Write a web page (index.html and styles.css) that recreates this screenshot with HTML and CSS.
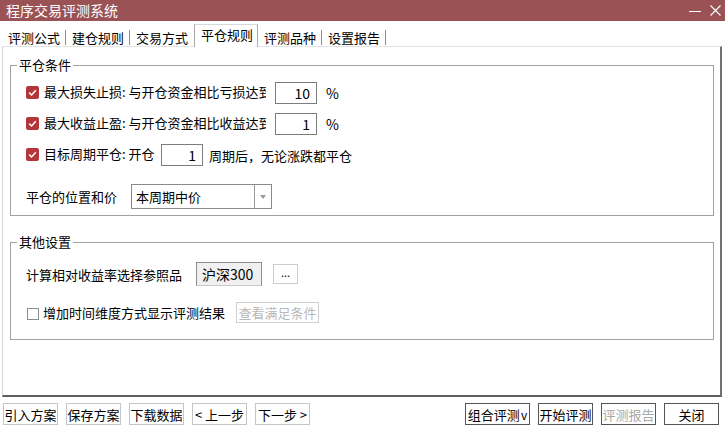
FILE: index.html
```html
<!DOCTYPE html>
<html>
<head>
<meta charset="utf-8">
<link rel="stylesheet" href="styles.css">
</head>
<body>
<div class="window">
  <div class="titlebar">
    <span class="title">程序交易评测系统</span>
    <div class="controls">
      <span class="min"></span>
      <svg class="close" width="11" height="11" viewBox="0 0 11 11"><path d="M0.5 0.5 L10.5 10.5 M10.5 0.5 L0.5 10.5" stroke="#fff" stroke-width="1.2" fill="none"/></svg>
    </div>
  </div>
  <div class="tabs">
    <div class="tab">评测公式</div>
    <div class="tab">建仓规则</div>
    <div class="tab before-active">交易方式</div>
    <div class="tab active">平仓规则</div>
    <div class="tab">评测品种</div>
    <div class="tab">设置报告</div>
  </div>
  <div class="panel">
    <div class="group g1">
      <span class="legend">平仓条件</span>
      <div class="row">
        <span class="cb checked"><svg width="13" height="13" viewBox="0 0 13 13"><path d="M3.2 6.6 L5.6 9 L9.8 4.2" stroke="#fff" stroke-width="1.5" fill="none"/></svg></span>
        <span class="clip">最大损失止损: 与开仓资金相比亏损达到</span>
        <span class="num">10</span>
        <span class="unit">%</span>
      </div>
      <div class="row">
        <span class="cb checked"><svg width="13" height="13" viewBox="0 0 13 13"><path d="M3.2 6.6 L5.6 9 L9.8 4.2" stroke="#fff" stroke-width="1.5" fill="none"/></svg></span>
        <span class="clip">最大收益止盈: 与开仓资金相比收益达到</span>
        <span class="num">1</span>
        <span class="unit">%</span>
      </div>
      <div class="row">
        <span class="cb checked"><svg width="13" height="13" viewBox="0 0 13 13"><path d="M3.2 6.6 L5.6 9 L9.8 4.2" stroke="#fff" stroke-width="1.5" fill="none"/></svg></span>
        <span class="lbl3">目标周期平仓: 开仓</span>
        <span class="num num3">1</span>
        <span class="after3">周期后，无论涨跌都平仓</span>
      </div>
      <div class="row selrow">
        <span class="sellbl">平仓的位置和价</span>
        <div class="select">
          <span class="seltext">本周期中价</span>
          <span class="selbtn"><span class="arrow"></span></span>
        </div>
      </div>
    </div>
    <div class="group g2">
      <span class="legend">其他设置</span>
      <div class="row r21">
        <span class="reflbl">计算相对收益率选择参照品</span>
        <span class="refbox">沪深300</span>
        <span class="dots">...</span>
      </div>
      <div class="row r22">
        <span class="cb empty"></span>
        <span class="cblbl">增加时间维度方式显示评测结果</span>
        <span class="disbtn">查看满足条件</span>
      </div>
    </div>
  </div>
  <div class="bottombar">
    <div class="bleft">
      <div class="btn light">引入方案</div>
      <div class="btn light">保存方案</div>
      <div class="btn light">下载数据</div>
      <div class="btn light">&lt; 上一步</div>
      <div class="btn light">下一步 &gt;</div>
    </div>
    <div class="bright">
      <div class="btn dark wide">组合评测<span class="v">v</span></div>
      <div class="btn dark">开始评测</div>
      <div class="btn dark disabled">评测报告</div>
      <div class="btn dark">关闭</div>
    </div>
  </div>
</div>
</body>
</html>
```

FILE: styles.css
```css
* { box-sizing: border-box; }
html, body { margin: 0; padding: 0; background: #fff; }
body {
  width: 725px;
  height: 432px;
  overflow: hidden;
  font-family: "Noto Sans CJK SC", "Noto Sans", sans-serif;
  font-size: 13px;
  color: #000;
}
.window { width: 725px; height: 432px; }

.titlebar {
  height: 21px;
  background: #9a5255;
  color: #fff;
  display: flex;
  align-items: center;
  justify-content: space-between;
  padding: 0 4px 0 6px;
}
.title { font-size: 14px; line-height: 21px; }
.controls { display: flex; align-items: center; }
.min { width: 12px; height: 1px; background: #fff; margin-right: 9px; margin-top: 1px; }
.close { display: block; }

.tabs {
  height: 25px;
  display: flex;
  align-items: flex-end;
  padding-left: 2px;
}
.tab {
  height: 15px;
  line-height: 15px;
  margin-bottom: 1px;
  padding: 0 5px 0 6px;
  border-right: 1px solid #8a8a8a;
  white-space: nowrap;
}
.tab.before-active { border-right-color: transparent; }
.tab.active {
  height: 23px;
  line-height: 20px;
  margin-bottom: -1px;
  padding: 0 4px 0 6px;
  border: 1px solid #a8a8a8;
  border-top-color: #d8d8d8;
  border-bottom: none;
  background: #fff;
  position: relative;
  z-index: 1;
}

.panel {
  margin: 0 3px 0 2px;
  height: 351px;
  border-top: 1px solid #e4e4e4;
  border-left: 1px solid #d4d4d4;
  border-right: 2px solid #727272;
  border-bottom: 2px solid #5e5e5e;
  padding: 0 6px 0 7px;
  display: flex;
  flex-direction: column;
}

.group {
  position: relative;
  border: 1px solid #a0a0a0;
}
.legend {
  position: absolute;
  top: -10px;
  left: 6px;
  background: #fff;
  padding: 0 2px;
  line-height: 18px;
}
.g1 { margin-top: 18px; padding: 16px 0 6px 15px; }
.g2 { margin-top: 26px; padding: 19px 0 16px 14px; }

.row { display: flex; align-items: center; height: 22px; }
.g1 .row + .row { margin-top: 9px; }
.g1 .row + .row.selrow { margin-top: 18px; height: 25px; }

.cb {
  width: 13px;
  height: 13px;
  flex: none;
  margin-right: 5px;
  margin-top: -2px;
}
.cb svg { display: block; }
.cb.checked { background: #b3363b; border-radius: 2px; }
.cb.empty { border: 1px solid #8c8c8c; width: 12px; height: 12px; margin-left: 2px; margin-right: 4px; margin-top: 2px; }

.clip {
  width: 222px;
  overflow: hidden;
  white-space: nowrap;
  line-height: 18px;
  margin-top: -3px;
}
.num {
  width: 42px;
  height: 22px;
  border: 1px solid #7c7c7c;
  text-align: right;
  padding-right: 6px;
  line-height: 20px;
  margin-left: 9px;
  font-size: 14px;
}
.unit { margin-left: 9px; font-size: 14px; }
.lbl3 { white-space: nowrap; line-height: 18px; margin-top: -3px; width: 117px; }
.num3 { margin-left: 0; }
.after3 { margin-left: 6px; white-space: nowrap; }

.sellbl { white-space: nowrap; }
.select {
  margin-left: 14px;
  width: 141px;
  height: 25px;
  border: 1px solid #8a8a8a;
  display: flex;
  align-items: center;
}
.seltext { flex: 1; padding-left: 4px; }
.selbtn {
  width: 17px;
  height: 23px;
  border-left: 1px solid #9a9a9a;
  display: flex;
  align-items: center;
  justify-content: center;
}
.arrow {
  width: 0; height: 0;
  border-left: 3px solid transparent;
  border-right: 3px solid transparent;
  border-top: 4px solid #9a9a9a;
}

.r21 { height: 24px; }
.reflbl { white-space: nowrap; margin-left: 1px; }
.refbox {
  margin-left: 14px;
  width: 66px;
  height: 24px;
  border: 1px solid #8e8e8e;
  border-bottom-color: #c8c8c8;
  background: #f0f0f0;
  padding-left: 5px;
  line-height: 22px;
  font-size: 14px;
}
.dots {
  margin-left: 11px;
  width: 25px;
  height: 20px;
  border: 1px solid #cdcdcd;
  text-align: center;
  line-height: 14px;
  font-size: 11px;
}
.r22 { margin-top: 16px; height: 21px; }
.cblbl { white-space: nowrap; }
.disbtn {
  margin-left: 11px;
  width: 83px;
  height: 21px;
  border: 1px solid #cfcfcf;
  color: #b8b8b8;
  line-height: 19px;
  text-align: center;
  white-space: nowrap;
}

.bottombar {
  display: flex;
  justify-content: space-between;
  padding: 6px 6px 0 3px;
}
.bleft, .bright { display: flex; gap: 8px; }
.btn {
  width: 55px;
  height: 22px;
  display: flex;
  align-items: center;
  justify-content: center;
  white-space: nowrap;
  background: #fff;
}
.btn.light { border: 1px solid #c6c6c6; }
.btn.dark { border: 1px solid #555; }
.btn.wide { width: 65px; }
.btn.disabled { color: #a8a8a8; }
.v { font-size: 12px; margin-left: 1px; }
```
